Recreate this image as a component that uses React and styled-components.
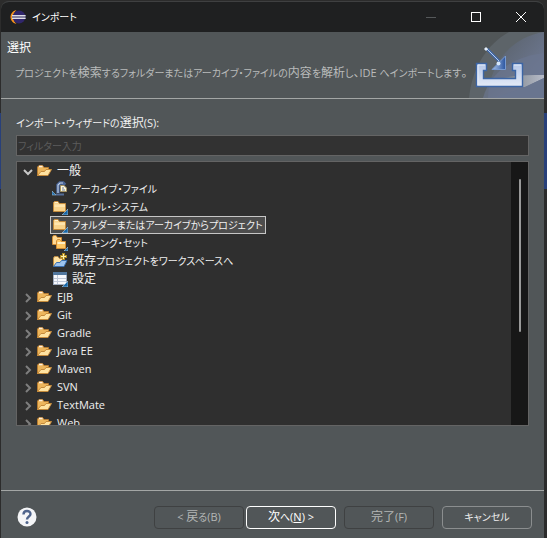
import React from "react";
import styled, { createGlobalStyle } from "styled-components";

const Global = createGlobalStyle`
  * { box-sizing: border-box; }
  html, body { margin: 0; }
  body {
    background: #262728;
    color: #f0f0f0;
    font: 12px/18px "Open Sans", "Noto Sans CJK JP", sans-serif;
    font-feature-settings: "palt";
  }
`;

const Desktop = styled.div`
  min-height: 100vh;
  display: flex;
  padding: 1px 3px 0 1px;
  background: linear-gradient(#2c2c2c 0 113px, #28407a 113px 189px, #2c2c2c 189px);
`;
const Dialog = styled.main`
  flex: 1;
  min-width: 0;
  display: flex;
  flex-direction: column;
  background: #515658;
  border-top: 1px solid #3f4041;
  border-radius: 8px 8px 0 0;
  overflow: hidden;
`;
const TitleBar = styled.header`
  height: 30px;
  display: flex;
  align-items: center;
  padding: 0 1px 0 9px;
  background: #1f2021;
  color: #fff;
`;
const Title = styled.h1`
  flex: 1;
  margin: 0 0 0 6px;
  font-size: 12px;
  font-weight: 400;
`;
const WindowButton = styled.button`
  width: 45px;
  height: 30px;
  padding: 0;
  display: grid;
  place-items: center;
  border: 0;
  background: none;
  color: ${(p) => (p.disabled ? "#55585a" : "#fff")};
`;
const Banner = styled.section`
  height: 67px;
  display: flex;
  justify-content: space-between;
  border-bottom: 1px solid #a3a6a5;
`;
const BannerText = styled.div`
  min-width: 0;
  padding: 7px 0 0 6px;
  white-space: nowrap;
`;
const Heading = styled.h2`
  margin: 0;
  font-size: 12px;
  font-weight: 400;
  color: #fff;
`;
const Description = styled.p`
  margin: 7px 0 0 8px;
  color: #b9bbbb;
`;
const BannerArt = styled.svg`
  flex: none;
  width: 75px;
  height: 66px;
`;
const Body = styled.section`
  flex: 1;
  display: flex;
  flex-direction: column;
  padding: 15px 15px 64px;
`;
const FilterLabel = styled.label`
  margin-bottom: 3px;
`;
const FilterInput = styled.input`
  height: 21px;
  margin-bottom: 5px;
  padding: 0 1px;
  border: 1px solid #646464;
  border-radius: 0;
  background: #323232;
  color: #eee;
  font: inherit;
  font-size: 10px;
  font-feature-settings: inherit;
  outline: 0;
  &::placeholder { color: #5c5c5c; opacity: 1; }
`;
const TreePanel = styled.div`
  flex: 1 1 0;
  min-height: 0;
  display: flex;
  border: 1px solid #646464;
  background: #2f2f2f;
  overflow: hidden;
`;
const Tree = styled.ul`
  flex: 1;
  min-width: 0;
  margin: 0;
  padding: 0 0 0 3px;
  list-style: none;
  overflow: hidden;
`;
const Group = styled.ul`
  margin: 0;
  padding: 0 0 0 30px;
  list-style: none;
`;
const Node = styled.li`
  white-space: nowrap;
`;
const Row = styled.div`
  height: 18px;
  width: fit-content;
  display: flex;
  align-items: center;
  padding-right: 3px;
  svg { flex: none; }
`;
const ItemRow = styled(Row)`
  padding-left: 2px;
  background: ${(p) => (p.$selected ? "#4d4d4d" : "transparent")};
  outline: ${(p) => (p.$selected ? "1px solid #c6c6c6" : "0")};
  outline-offset: -1px;
`;
const RowText = styled.span`
  margin-left: 4px;
`;
const ScrollTrack = styled.div`
  flex: none;
  width: 17px;
  padding: 17px 0 0 8px;
  background: #171717;
`;
const ScrollThumb = styled.div`
  width: 2px;
  height: 153px;
  border-radius: 1px;
  background: #999;
`;
const Footer = styled.footer`
  height: 48px;
  display: flex;
  align-items: center;
  padding: 5px 12px 0 15px;
  border-top: 1px solid #a3a6a5;
`;
const HelpButton = styled.button`
  width: 22px;
  height: 22px;
  padding: 0;
  margin-right: auto;
  border: 0;
  background: none;
`;
const Actions = styled.div`
  display: flex;
  gap: 8px;
`;
const StepActions = styled.div`
  display: flex;
  gap: 2px;
`;
const tones = {
  normal: ["#8b8e8f", "#eeeeee"],
  primary: ["#ffffff", "#ffffff"],
  disabled: ["#3f4142", "#b4b6b6"],
};
const ActionButton = styled.button`
  width: 90px;
  height: 23px;
  padding: 0;
  border: 1px solid ${(p) => tones[p.$tone][0]};
  border-radius: 4px;
  background: #515658;
  color: ${(p) => tones[p.$tone][1]};
  font: inherit;
  font-feature-settings: inherit;
  line-height: 18px;
`;

const Kana = styled.span`
  font-size: 10px;
  line-height: 1;
`;
const Latin = styled.span`
  font-size: 11px;
  line-height: 1;
`;

/* UI text: kanji at full size, kana and Latin runs set more compactly. */
const Label = ({ children }) =>
  children.match(/[\u3041-\u30ff]+|[\x20-\x7e]+|[^\u3041-\u30ff\x20-\x7e]+/g).map((run, i) => {
    if (/^[\u3041-\u30ff]/.test(run)) return <Kana key={i}>{run}</Kana>;
    if (/^[\x20-\x7e]/.test(run)) return <Latin key={i}>{run}</Latin>;
    return run;
  });

const EclipseIcon = () => (
  <svg width="16" height="16" viewBox="0 0 16 16" aria-hidden="true">
    <path d="M6.500 1C-1.500 3 -1.500 13 6.500 15C2.500 11 2.500 5 6.500 1Z" fill="#f7941e" />
    <circle cx="9" cy="8" r="6.500" fill="#30266b" />
    <path d="M2 8H15.500" stroke="#86839f" strokeWidth="4" />
    <path d="M2 6.500H15.500M2 9.500H15.500" stroke="#dedde6" />
  </svg>
);

const Chevron = ({ open }) => (
  <svg width="16" height="16" viewBox="0 0 16 16" fill="none" stroke={open ? "#c8c8c8" : "#7e7e7e"} strokeWidth="2" aria-hidden="true">
    {open ? <path d="M4 7L8 11L12 7" /> : <path d="M6 5L10 9L6 13" />}
  </svg>
);

const OpenFolder = () => (
  <svg width="17" height="16" viewBox="0 0 17 16" aria-hidden="true">
    <path d="M1.500 13V4L3 2.500H6.500L8 4.500H12.500V8" fill="#edb65c" stroke="#b57b31" />
    <path d="M3 3.500H6.500" stroke="#fff0e0" strokeWidth="1.500" />
    <path d="M1.500 12.500L5 8.500H8.500L10 6.500H15.500L12 12.500Z" fill="#ffe3a1" stroke="#c58a3a" />
  </svg>
);

const Corner = () => <path d="M16 10V16H10Z" fill="#1767a8" stroke="#d4e5f2" strokeWidth=".5" />;

const FolderShape = () => (
  <>
    <path d="M1.500 12.500V3.500L2.500 2.500H6L7.500 4.500H13.500V12.500Z" fill="#f9d48c" stroke="#c48b3c" />
    <path d="M2.500 5.500H13V8H2.500Z" fill="#ffe5ad" />
    <path d="M3 3.500H6" stroke="#fff0d0" />
  </>
);

const itemIcons = {
  archive: (
    <>
      <path d="M6 12V4L8 2H11L13 4" fill="none" stroke="#4a6596" strokeWidth="3.500" />
      <path d="M6 12V4L8 2H11" fill="none" stroke="#bfcfe5" strokeWidth="1.200" />
      <path d="M4 13.500H12" stroke="#536c97" strokeWidth="2" />
      <path d="M8.500 4.500H12L14.500 7V10.500H8.500Z" fill="#fff8dc" stroke="#a69463" />
      <path d="M10 7H12M10 9H13" stroke="#6d7f9d" />
      <path d="M0 10V14H4Z" fill="#1767a8" stroke="#b9d8ed" strokeWidth=".5" />
    </>
  ),
  folder: (
    <>
      <FolderShape />
      <Corner />
    </>
  ),
  workingSet: (
    <>
      <path d="M.5 9.500V2L1.500 .5H4L5.500 2.500H9.500V9.500Z" fill="#ffd994" stroke="#d18d35" />
      <path d="M4.500 13.500V6L5.500 4.500H8L9.500 6.500H13.500V13.500Z" fill="#ffc864" stroke="#d18d35" />
      <path d="M5.500 8H13" stroke="#fff0c7" strokeWidth="2" />
      <path d="M16 12V16H12Z" fill="#1767a8" stroke="#d4e5f2" strokeWidth=".5" />
    </>
  ),
  existing: (
    <>
      <path d="M1.500 13V5L2.500 3.500H6L7.500 5.500H12.500V9" fill="#ffe2a2" stroke="#bd8b43" />
      <path d="M1.500 13.500L4.500 9.500H8L9.500 7.500H15L12 13.500Z" fill="#9dc3ee" stroke="#3c70b0" />
      <path d="M11.500 0V7M8 3.500H15" stroke="#b08a20" strokeWidth="3" />
      <path d="M11.500 1V6M9 3.500H14" stroke="#fff2b1" />
    </>
  ),
  preferences: (
    <>
      <rect x="1.500" y="1.500" width="13" height="12" fill="#f7f8fc" stroke="#a0abbd" />
      <path d="M1 2.500H15" stroke="#52779e" strokeWidth="3" />
      <path d="M5.500 4V13M2 7.500H14M2 10.500H14" stroke="#c1c9d8" />
      <Corner />
    </>
  ),
};

const ItemIcon = ({ name }) => (
  <svg width="16" height="16" viewBox="0 0 16 16" aria-hidden="true">{itemIcons[name]}</svg>
);

const ImportArt = () => (
  <BannerArt viewBox="0 0 75 66" aria-hidden="true">
    <defs>
      <linearGradient id="band" x1="0" y1="0" x2="1" y2="1">
        <stop offset="0" stopColor="#565d62" />
        <stop offset="1" stopColor="#7480a0" />
      </linearGradient>
      <linearGradient id="shine" x1="0" y1="0" x2="1" y2="0">
        <stop offset="0" stopColor="#6b7277" />
        <stop offset="1" stopColor="#b7bcc9" />
      </linearGradient>
      <linearGradient id="tray" x1="0" y1="0" x2="0" y2="1">
        <stop offset="0" stopColor="#b5c7e9" />
        <stop offset="1" stopColor="#e4eaf6" />
      </linearGradient>
      <linearGradient id="arrow" x1="0" y1="0" x2="1" y2="0">
        <stop offset="0" stopColor="#a9c3e9" />
        <stop offset="1" stopColor="#2b55a0" />
      </linearGradient>
    </defs>
    <path d="M0 66C3 36 18 12 40 0H75V66Z" fill="#5d6469" />
    <path d="M19 66C20 32 42 5 75 0V66Z" fill="url(#band)" />
    <path d="M14 66C22 36 50 24 75 21V66Z" fill="#6c7690" opacity=".65" />
    <path d="M30 47C45 43 60 43 75 43V46L56 55H26Z" fill="url(#shine)" />
    <path d="M56 55L75 46V66H25Z" fill="#69758f" />
    <path d="M7.500 31.500H17.500V38.500H14.500V46.500H46.500V38.500H43.500V31.500H53.500V54.500H7.500Z" fill="url(#tray)" stroke="#3c65a5" strokeWidth="1.400" />
    <path d="M9 53V33H16M45 33H52" fill="none" stroke="#e6edf9" />
    <path d="M18 17L31 30" stroke="#4068a8" strokeWidth="3" />
    <path d="M17 16L30 29" stroke="#b9cdeb" strokeWidth="1" />
    <path d="M17 15L19 17L17 19L15 17Z" fill="#e4edfa" />
    <path d="M36.500 24V37.500H23Z" fill="url(#arrow)" stroke="#7799cf" />
    <circle cx="29.500" cy="31.500" r="2" fill="#d5e6fa" />
  </BannerArt>
);

const generalItems = [
  { icon: "archive", text: "アーカイブ・ファイル" },
  { icon: "folder", text: "ファイル・システム" },
  { icon: "folder", text: "フォルダーまたはアーカイブからプロジェクト", selected: true },
  { icon: "workingSet", text: "ワーキング・セット" },
  { icon: "existing", text: "既存プロジェクトをワークスペースへ" },
  { icon: "preferences", text: "設定" },
];
const categories = ["EJB", "Git", "Gradle", "Java EE", "Maven", "SVN", "TextMate", "Web"];

export default function App() {
  return (
    <>
      <Global />
      <Desktop>
        <Dialog>
          <TitleBar>
            <EclipseIcon />
            <Title><Label>インポート</Label></Title>
            <WindowButton disabled aria-label="最小化">
              <svg width="10" height="10"><path d="M0 5.500H10" stroke="currentColor" /></svg>
            </WindowButton>
            <WindowButton aria-label="最大化">
              <svg width="10" height="10"><rect x=".5" y=".5" width="9" height="9" fill="none" stroke="currentColor" /></svg>
            </WindowButton>
            <WindowButton aria-label="閉じる">
              <svg width="10" height="10"><path d="M0 0L10 10M10 0L0 10" stroke="currentColor" /></svg>
            </WindowButton>
          </TitleBar>
          <Banner>
            <BannerText>
              <Heading>選択</Heading>
              <Description><Label>プロジェクトを検索するフォルダーまたはアーカイブ・ファイルの内容を解析し、IDE へインポートします。</Label></Description>
            </BannerText>
            <ImportArt />
          </Banner>
          <Body>
            <FilterLabel htmlFor="filter"><Label>インポート・ウィザードの選択(S):</Label></FilterLabel>
            <FilterInput id="filter" type="text" placeholder="フィルター入力" />
            <TreePanel>
              <Tree role="tree" aria-label="インポート・ウィザード">
                <Node role="treeitem" aria-expanded="true">
                  <Row>
                    <Chevron open />
                    <OpenFolder />
                    <RowText>一般</RowText>
                  </Row>
                  <Group role="group">
                    {generalItems.map((item) => (
                      <Node key={item.text} role="treeitem" aria-selected={!!item.selected}>
                        <ItemRow $selected={item.selected}>
                          <ItemIcon name={item.icon} />
                          <RowText><Label>{item.text}</Label></RowText>
                        </ItemRow>
                      </Node>
                    ))}
                  </Group>
                </Node>
                {categories.map((name) => (
                  <Node key={name} role="treeitem" aria-expanded="false">
                    <Row>
                      <Chevron />
                      <OpenFolder />
                      <RowText><Label>{name}</Label></RowText>
                    </Row>
                  </Node>
                ))}
              </Tree>
              <ScrollTrack>
                <ScrollThumb />
              </ScrollTrack>
            </TreePanel>
          </Body>
          <Footer>
            <HelpButton aria-label="ヘルプ">
              <svg width="22" height="22" viewBox="0 0 22 22">
                <circle cx="11" cy="11" r="9.500" fill="#f4f5f7" />
                <path d="M7.500 8.500C7.500 4 14.500 4 14.500 8C14.500 10.500 11 10.500 11 13.500" fill="none" stroke="#4f648c" strokeWidth="2.400" />
                <circle cx="11" cy="16.500" r="1.500" fill="#4f648c" />
              </svg>
            </HelpButton>
            <Actions>
              <StepActions>
                <ActionButton $tone="disabled" disabled><Label>{"< 戻る(B)"}</Label></ActionButton>
                <ActionButton $tone="primary"><Label>次へ(</Label><Latin as="u">N</Latin><Label>{") >"}</Label></ActionButton>
              </StepActions>
              <ActionButton $tone="disabled" disabled><Label>完了(F)</Label></ActionButton>
              <ActionButton $tone="normal"><Label>キャンセル</Label></ActionButton>
            </Actions>
          </Footer>
        </Dialog>
      </Desktop>
    </>
  );
}
